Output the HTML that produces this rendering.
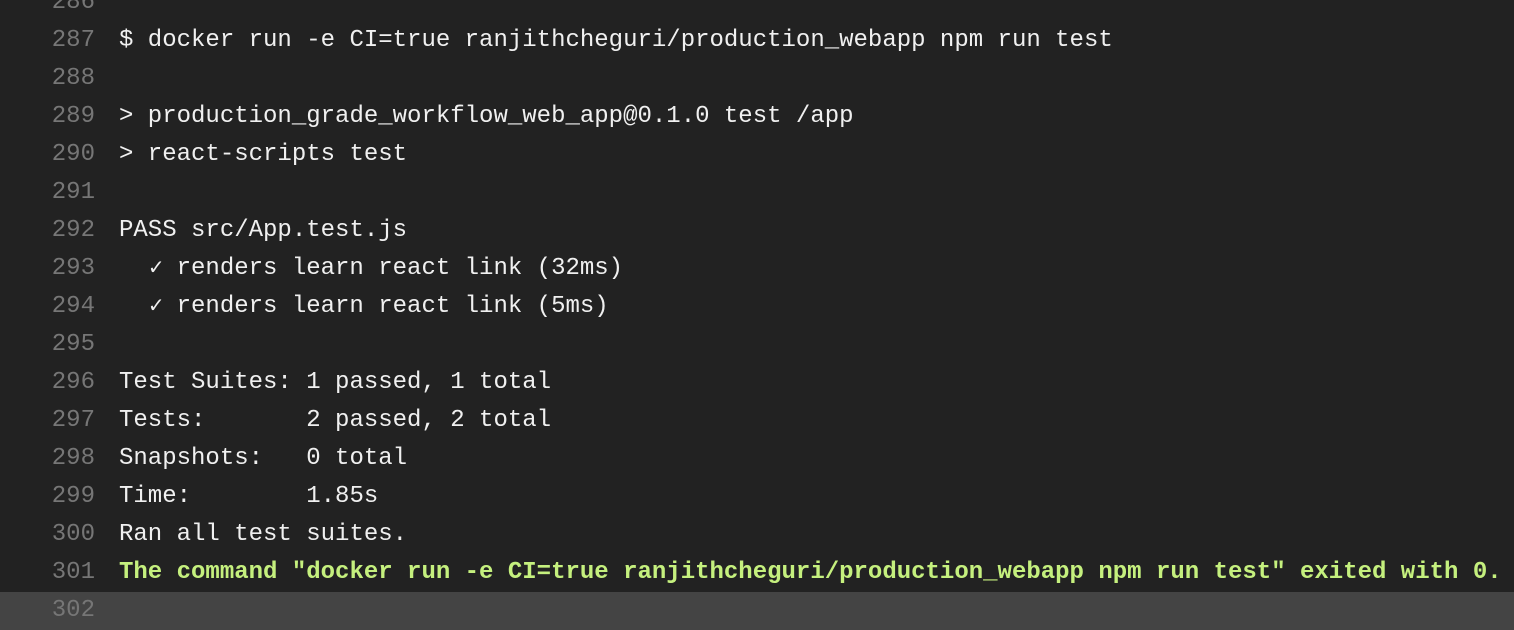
<!DOCTYPE html>
<html><head><style>
html,body{margin:0;padding:0;background:#222;overflow:hidden;width:1514px;height:616px}
.wrap{position:absolute;top:-16px;left:0;width:1514px}
.r{height:38px;line-height:38px;font-family:"Liberation Mono",monospace;font-size:24px;white-space:pre;color:#f0f0f0;display:flex}
.n{width:95px;text-align:right;color:#767676;flex:none}
.t{margin-left:24px}
.g{color:#c5f07e;font-weight:bold}
.hl{background:#444}
.ck{display:inline-block;width:14.4px;overflow:visible;font-size:20px;text-align:center}
</style></head><body><div class="wrap">
<div class="r"><span class="n">286</span><span class="t"></span></div>
<div class="r"><span class="n">287</span><span class="t">$ docker run -e CI=true ranjithcheguri/production_webapp npm run test</span></div>
<div class="r"><span class="n">288</span><span class="t"></span></div>
<div class="r"><span class="n">289</span><span class="t">&gt; production_grade_workflow_web_app@0.1.0 test /app</span></div>
<div class="r"><span class="n">290</span><span class="t">&gt; react-scripts test</span></div>
<div class="r"><span class="n">291</span><span class="t"></span></div>
<div class="r"><span class="n">292</span><span class="t">PASS src/App.test.js</span></div>
<div class="r"><span class="n">293</span><span class="t">  <span class="ck">✓</span> renders learn react link (32ms)</span></div>
<div class="r"><span class="n">294</span><span class="t">  <span class="ck">✓</span> renders learn react link (5ms)</span></div>
<div class="r"><span class="n">295</span><span class="t"></span></div>
<div class="r"><span class="n">296</span><span class="t">Test Suites: 1 passed, 1 total</span></div>
<div class="r"><span class="n">297</span><span class="t">Tests:       2 passed, 2 total</span></div>
<div class="r"><span class="n">298</span><span class="t">Snapshots:   0 total</span></div>
<div class="r"><span class="n">299</span><span class="t">Time:        1.85s</span></div>
<div class="r"><span class="n">300</span><span class="t">Ran all test suites.</span></div>
<div class="r"><span class="n">301</span><span class="t g">The command "docker run -e CI=true ranjithcheguri/production_webapp npm run test" exited with 0.</span></div>
<div class="r hl"><span class="n">302</span><span class="t"></span></div>
</div></body></html>
